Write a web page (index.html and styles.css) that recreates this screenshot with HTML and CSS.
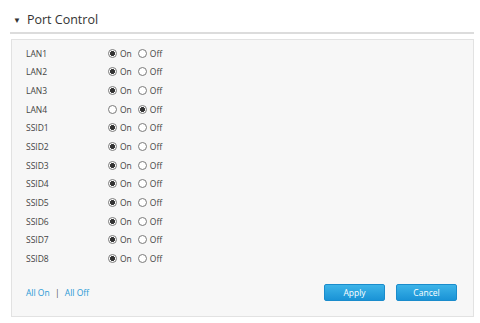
FILE: index.html
```html
<!DOCTYPE html>
<html lang="en">

<head>
    <meta charset="UTF-8">
    <meta name="viewport" content="width=device-width, initial-scale=1.0">
    <title>Port Control</title>

    <link rel="stylesheet" href="styles.css">

</head>

<body>
    <div class="section">
        <h3 class="section-title"><span class="arrow">&#9660;</span>Port Control</h3>

        <form class="panel" id="portForm">
            <div class="row"><span class="name">LAN1</span>
                <label><input type="radio" name="lan1" checked> On</label>
                <label><input type="radio" name="lan1"> Off</label></div>
            <div class="row"><span class="name">LAN2</span>
                <label><input type="radio" name="lan2" checked> On</label>
                <label><input type="radio" name="lan2"> Off</label></div>
            <div class="row"><span class="name">LAN3</span>
                <label><input type="radio" name="lan3" checked> On</label>
                <label><input type="radio" name="lan3"> Off</label></div>
            <div class="row"><span class="name">LAN4</span>
                <label><input type="radio" name="lan4"> On</label>
                <label><input type="radio" name="lan4" checked> Off</label></div>
            <div class="row"><span class="name">SSID1</span>
                <label><input type="radio" name="ssid1" checked> On</label>
                <label><input type="radio" name="ssid1"> Off</label></div>
            <div class="row"><span class="name">SSID2</span>
                <label><input type="radio" name="ssid2" checked> On</label>
                <label><input type="radio" name="ssid2"> Off</label></div>
            <div class="row"><span class="name">SSID3</span>
                <label><input type="radio" name="ssid3" checked> On</label>
                <label><input type="radio" name="ssid3"> Off</label></div>
            <div class="row"><span class="name">SSID4</span>
                <label><input type="radio" name="ssid4" checked> On</label>
                <label><input type="radio" name="ssid4"> Off</label></div>
            <div class="row"><span class="name">SSID5</span>
                <label><input type="radio" name="ssid5" checked> On</label>
                <label><input type="radio" name="ssid5"> Off</label></div>
            <div class="row"><span class="name">SSID6</span>
                <label><input type="radio" name="ssid6" checked> On</label>
                <label><input type="radio" name="ssid6"> Off</label></div>
            <div class="row"><span class="name">SSID7</span>
                <label><input type="radio" name="ssid7" checked> On</label>
                <label><input type="radio" name="ssid7"> Off</label></div>
            <div class="row"><span class="name">SSID8</span>
                <label><input type="radio" name="ssid8" checked> On</label>
                <label><input type="radio" name="ssid8"> Off</label></div>

            <div class="footer">
                <div class="links">
                    <a href="#" id="allOn">All On</a>
                    <span class="sep">|</span>
                    <a href="#" id="allOff">All Off</a>
                </div>
                <div class="buttons">
                    <button type="button" class="btn">Apply</button>
                    <button type="button" class="btn">Cancel</button>
                </div>
            </div>
        </form>
    </div>

    <script>
        // включить / выключить все порты
        function setAll(index) {
            for (let row of document.querySelectorAll('.row')) {
                row.querySelectorAll('input')[index].checked = true;
            }
        }

        document.getElementById('allOn').addEventListener('click', function (e) {
            e.preventDefault();
            setAll(0);
        });

        document.getElementById('allOff').addEventListener('click', function (e) {
            e.preventDefault();
            setAll(1);
        });
    </script>
</body>

</html>
```

FILE: styles.css
```css
* {
    font-family: "Open Sans", "Noto Sans", sans-serif;
    box-sizing: border-box;
}

body {
    margin: 0;
    background-color: #fff;
    color: #333;
}

.section {
    margin: 0 6px 0 10px;
    padding-top: 11px;
}

.section-title {
    margin: 0;
    padding: 0 0 4px 3px;
    font-size: 12.5px;
    font-weight: normal;
    color: #333;
    border-bottom: 2px solid #dcdcdc;
    display: flex;
    align-items: center;
}

.arrow {
    font-size: 8px;
    margin-right: 6px;
    color: #333;
}

.panel {
    margin: 5px 0 0 1px;
    padding: 4px 14px 15px 14px;
    background-color: #f7f7f7;
    border: 1px solid #e2e2e2;
}

.row {
    display: flex;
    align-items: center;
    height: 18.65px;
    font-size: 8.5px;
    color: #444;
}

.name {
    width: 82px;
}

.row label {
    display: inline-flex;
    align-items: center;
    margin-right: 6px;
}

.row input {
    appearance: none;
    margin: 0 3px 0 0;
    width: 9px;
    height: 9px;
    border: 1px solid #7a7a7a;
    border-radius: 50%;
    background-color: #fff;
}

.row input:checked {
    background: radial-gradient(circle, #333 0 2.2px, #fff 2.8px);
}

.footer {
    display: flex;
    justify-content: space-between;
    align-items: center;
    margin-top: 16px;
}

.links {
    font-size: 8.5px;
}

.links a {
    color: #2b9ad6;
    text-decoration: none;
}

.sep {
    margin: 0 3px;
    color: #555;
}

.buttons {
    display: flex;
    gap: 11px;
    margin-right: 2px;
}

.btn {
    width: 61px;
    height: 17px;
    padding: 0;
    border: 1px solid #1a8ccc;
    border-radius: 2px;
    background: linear-gradient(#3db4e8, #1a93d6);
    color: #fff;
    font-size: 8.5px;
}
```
